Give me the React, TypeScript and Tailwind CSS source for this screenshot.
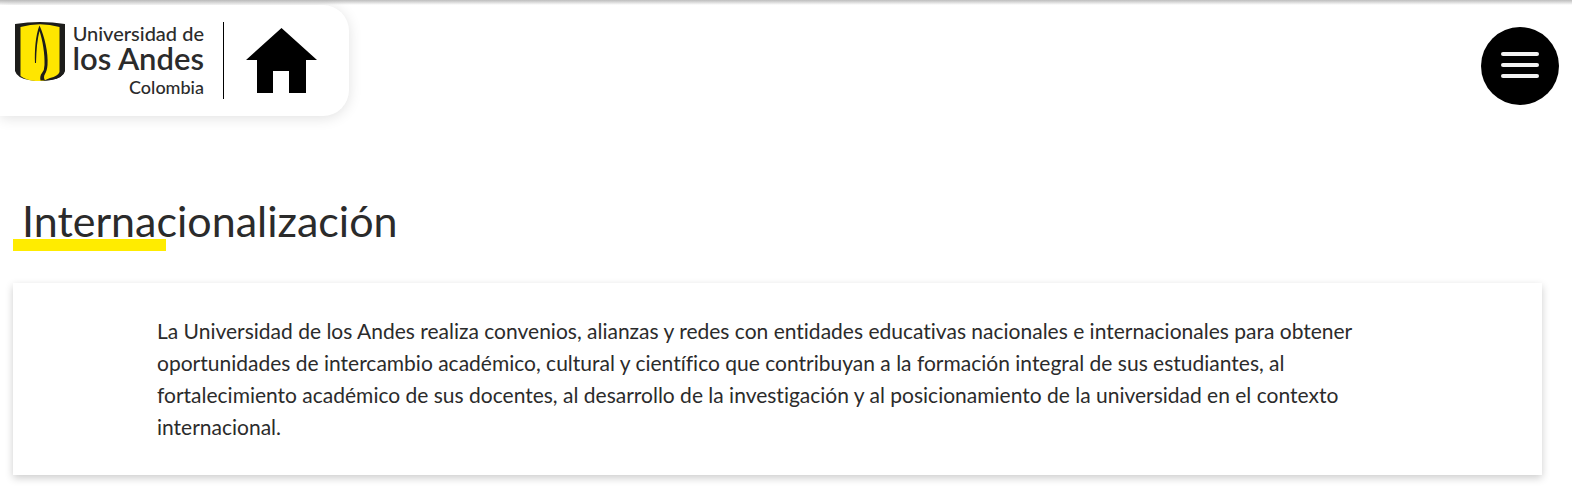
function Shield() {
  return (
    <svg viewBox="0 0 50 59" className="h-[59px] w-[50px]" aria-hidden="true">
      <path d="M0 2 Q25 -2 50 2 V49 Q48 56 36 58 Q25 60 14 58 Q2 56 0 49 Z" fill="#1d1d1b" />
      <path d="M5.500 5 Q25 -0.500 44.500 5 V50 Q43 54 35 56 L28 59 Q14 60 5.500 54 Z" fill="#ffe600" />
      <path d="M24.500 3.500 C29.500 14 33.500 31 32.500 43 Q32 49 30 52 Q28 55 30 58.500 L25.500 58.500 Q24.500 54 27 51 Q29.500 48 29.500 43 C30 32 27.500 18 24.500 9 Q21.500 20 21 41 H20 C19.500 29 20.500 13 24.500 3.500 Z" fill="#1d1d1b" />
      <path d="M29 58.500 Q40 57 46 52 L50 49 Q48 56 36 58 Z" fill="#1d1d1b" />
    </svg>
  );
}

export default function App() {
  return (
    <div className="bg-white pb-6 font-['Lato',sans-serif] text-[#2b2b2b] [font-variant-ligatures:none]">
      <div className="h-[5px] bg-linear-to-b from-[#bdbdbd] to-white" />
      <header className="flex items-start justify-between">
        <div className="flex h-[111px] items-start rounded-r-[26px] bg-white pt-[17px] pr-8 pl-[15px] shadow-[0_2px_14px_rgba(0,0,0,0.12)]">
          <a href="#uniandes" className="flex gap-[5px]">
            <Shield />
            <span className="flex w-[134px] flex-col items-end whitespace-nowrap">
              <span className="text-[20px] leading-[22px] font-medium">Universidad de</span>
              <span className="text-[31px] leading-[28px] font-semibold">los Andes</span>
              <span className="text-[18px] leading-[30px] font-medium">Colombia</span>
            </span>
          </a>
          <span className="ml-[19px] h-[77px] w-px bg-black" />
          <a href="#inicio" aria-label="Inicio" className="mt-[6px] ml-[22px]">
            <svg viewBox="0 0 71 65" className="h-[65px] w-[71px]" aria-hidden="true">
              <path d="M35.500 0 L71 32 H60 V65 H43 V43 H27 V65 H11 V32 H0 Z" fill="#000" />
            </svg>
          </a>
        </div>
        <button
          type="button"
          aria-label="Abrir menú"
          className="mt-[22px] mr-[13px] flex size-[78px] flex-col items-center justify-center gap-[7px] rounded-full bg-black pb-[2px]"
        >
          <span className="h-1 w-[38px] rounded-full bg-[#f2f2f2]" />
          <span className="h-1 w-[38px] rounded-full bg-[#f2f2f2]" />
          <span className="h-1 w-[38px] rounded-full bg-[#f2f2f2]" />
        </button>
      </header>
      <main className="mr-[30px] ml-[13px] pt-[75px]">
        <h1 className="relative px-[9px] text-[43px] leading-[60px] font-normal">
          <span className="absolute bottom-0 left-0 h-3 w-[153px] bg-[#ffec00]" />
          <span className="relative">Internacionalización</span>
        </h1>
        <section className="mt-8 bg-white px-36 py-8 shadow-[0_3px_8px_rgba(0,0,0,0.2)]">
          <p className="text-[21px] leading-8">
            La Universidad de los Andes realiza convenios, alianzas y redes con entidades educativas nacionales e
            internacionales para obtener oportunidades de intercambio académico, cultural y científico que contribuyan
            a la formación integral de sus estudiantes, al fortalecimiento académico de sus docentes, al desarrollo de
            la investigación y al posicionamiento de la universidad en el contexto internacional.
          </p>
        </section>
      </main>
    </div>
  );
}
